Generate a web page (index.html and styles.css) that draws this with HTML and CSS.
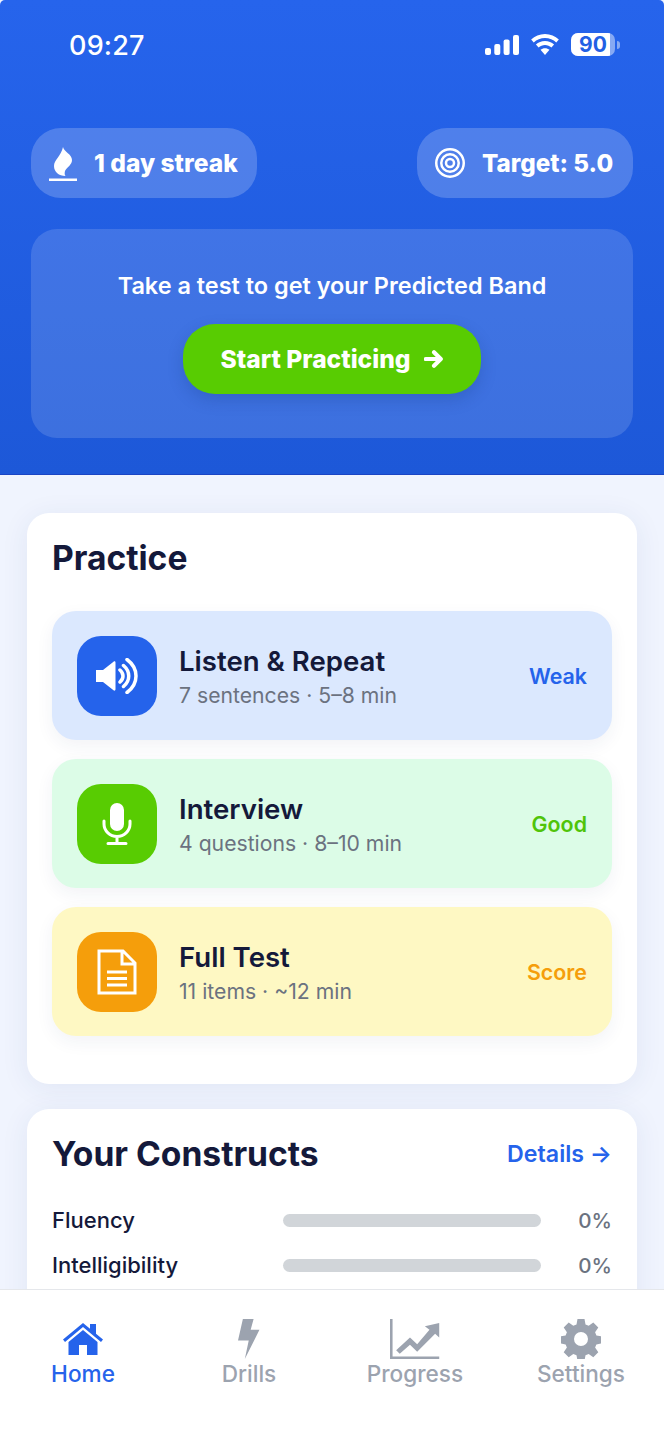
FILE: index.html
```html
<!DOCTYPE html>
<html lang="en">
<head>
<meta charset="utf-8">
<title>Home</title>
<link rel="stylesheet" href="styles.css">
</head>
<body>
<div class="app">
  <div class="scroll">
    <header class="hero">
      <div class="status">
        <span class="time">09:27</span>
        <div class="status-icons">
          <svg class="signal" viewBox="0 0 34 20"><rect x="0" y="13" width="6" height="7" rx="2"/><rect x="9.3" y="9" width="6" height="11" rx="2"/><rect x="18.6" y="4.5" width="6" height="15.5" rx="2"/><rect x="28" y="0" width="6" height="20" rx="2"/></svg>
          <svg class="wifi" viewBox="0 0 30 22"><path d="M15 0C9.3 0 4.3 2.2 0.5 5.8L3.2 8.8C6.3 5.9 10.4 4.1 15 4.1s8.7 1.8 11.8 4.7l2.7-3C25.7 2.2 20.7 0 15 0z"/><path d="M15 7.4c-3.7 0-7 1.4-9.5 3.7l2.8 3c1.8-1.6 4.1-2.6 6.7-2.6s4.9 1 6.7 2.6l2.8-3C22 8.8 18.7 7.4 15 7.4z"/><path d="M15 14.8c-1.8 0-3.4 0.7-4.7 1.8L15 22l4.7-5.4c-1.3-1.1-2.9-1.8-4.7-1.8z"/></svg>
          <div class="battery">
            <div class="battery-body"><div class="battery-fill"></div><span class="battery-num">90</span></div>
            <div class="battery-nub"></div>
          </div>
        </div>
      </div>
      <div class="pills">
        <div class="pill pill-streak">
          <svg class="pill-icon flame" viewBox="0 0 28 34"><path d="M14 0C15 5 23 7 23 13C23 18 18 20 16 24C15.5 26 15.5 28 16.5 29C10 29 5 25 5 19C5 13 12 9 14 0z"/><rect x="0" y="31.5" width="28" height="2.5"/></svg>
          <span>1 day streak</span>
        </div>
        <div class="pill pill-target">
          <svg class="pill-icon rings" viewBox="0 0 30 30"><circle cx="15" cy="15" r="13.75"/><circle cx="15" cy="15" r="8.75"/><circle cx="15" cy="15" r="4"/></svg>
          <span>Target: 5.0</span>
        </div>
      </div>
      <section class="predict">
        <p class="predict-text">Take a test to get your Predicted Band</p>
        <button class="start">Start Practicing
          <svg class="start-arrow" viewBox="0 0 22 22"><path d="M2 11h16M11 3.5l7.5 7.5-7.5 7.5"/></svg>
        </button>
      </section>
    </header>

    <main class="content">
      <section class="card card-practice">
        <h2 class="card-title">Practice</h2>
        <div class="rows">
          <div class="row row-blue">
            <div class="tile tile-blue">
              <svg class="tile-icon" viewBox="0 0 42 36"><path class="solid" d="M0 12h7L17.5 3.7c1-.8 2-.3 2 1v26.6c0 1.3-1 1.800-2 1L7 24H0z"/><path class="line" d="M24 12c4 3.500 4 8.500 0 12M27.500 7.500c7 6 7 15 0 21M31 1.500c12 9 12 24 0 33"/></svg>
            </div>
            <div class="row-text">
              <div class="row-title">Listen &amp; Repeat</div>
              <div class="row-sub">7 sentences · 5–8 min</div>
            </div>
            <span class="badge badge-blue">Weak</span>
          </div>
          <div class="row row-green">
            <div class="tile tile-green">
              <svg class="tile-icon mic" viewBox="0 0 30 42"><rect class="solid" x="8" y="0" width="14" height="28" rx="7"/><path class="line" d="M2 18v3c0 7 6 12.5 13 12.5S28 28 28 21v-3M15 33.5v7M6 40.5h18"/></svg>
            </div>
            <div class="row-text">
              <div class="row-title">Interview</div>
              <div class="row-sub">4 questions · 8–10 min</div>
            </div>
            <span class="badge badge-green">Good</span>
          </div>
          <div class="row row-yellow">
            <div class="tile tile-orange">
              <svg class="tile-icon doc" viewBox="0 0 40 46"><path class="line" d="M2 2h24l12 12v30H2zM25 2v13h13M10 23h20M10 29.5h20M10 36h20"/></svg>
            </div>
            <div class="row-text">
              <div class="row-title">Full Test</div>
              <div class="row-sub">11 items · ~12 min</div>
            </div>
            <span class="badge badge-orange">Score</span>
          </div>
        </div>
      </section>

      <section class="card card-constructs">
        <div class="card-head">
          <h2 class="card-title">Your Constructs</h2>
          <a class="details">Details →</a>
        </div>
        <div class="meter"><span class="meter-name">Fluency</span><div class="meter-bar"></div><span class="meter-val">0%</span></div>
        <div class="meter"><span class="meter-name">Intelligibility</span><div class="meter-bar"></div><span class="meter-val">0%</span></div>
      </section>
    </main>
  </div>

  <nav class="tabs">
    <a class="tab tab-active">
      <svg class="tab-icon icon-home" viewBox="0 0 40 32"><path d="M20 0L0 16.5l2 2.4L20 4l18 14.9 2-2.4-7-5.8V1h-6v4.7z"/><path d="M20 7L5.5 19v13h10.5V22h8v10h10.5V19z"/></svg>
      <span>Home</span>
    </a>
    <a class="tab">
      <svg class="tab-icon" viewBox="0 0 22 41"><path d="M5 0h11l-3 11h9L7 41l4-19H0z"/></svg>
      <span>Drills</span>
    </a>
    <a class="tab">
      <svg class="tab-icon" viewBox="0 0 48 39"><path d="M0 0h2.5v36.5H48V39H0z"/><path d="M6 30.5l13.5-12.5 7 6.5L38.5 10.5 34 7l14-3v14l-4-3.5L26.5 32 19.5 25 9.5 34z"/></svg>
      <span>Progress</span>
    </a>
    <a class="tab">
      <svg class="tab-icon" viewBox="0 0 40 40"><path fill-rule="evenodd" d="M16.5 0h7l1 5.5 3.2 1.3 4.6-3.2 5 5-3.2 4.6 1.3 3.2 5.5 1v7l-5.5 1-1.3 3.2 3.2 4.6-5 5-4.6-3.2-3.2 1.3-1 5.5h-7l-1-5.5-3.2-1.3-4.6 3.2-5-5 3.2-4.6-1.3-3.2-5.5-1v-7l5.5-1 1.3-3.2-3.2-4.6 5-5 4.6 3.2 3.2-1.3zM20 13a7 7 0 1 0 0 14 7 7 0 0 0 0-14z"/></svg>
      <span>Settings</span>
    </a>
  </nav>
</div>
</body>
</html>
```
FILE: styles.css
```css
* { box-sizing: border-box; margin: 0; padding: 0; }

html, body { height: 100%; background: #fff; }

body {
  font-family: Inter, "Liberation Sans", sans-serif;
  overflow: hidden;
}

.app {
  width: 664px;
  height: 1440px;
  display: flex;
  flex-direction: column;
  overflow: hidden;
}

.scroll {
  flex: 1;
  min-height: 0;
  overflow: hidden;
  background: #f0f4fe;
}

/* Blue header */
.hero {
  height: 475px;
  padding: 0 31px;
  background: linear-gradient(180deg, #2664ec 0%, #1d58d8 100%);
  border-bottom: 1px solid #1a45c4;
  border-radius: 5px 5px 0 0;
  color: #fff;
}

.status {
  height: 128px;
  padding: 34px 13px 0 38px;
  display: flex;
  justify-content: space-between;
  align-items: flex-start;
}

.time {
  font-size: 27px;
  line-height: 24px;
  font-weight: 500;
  letter-spacing: 0.2px;
}

.status-icons {
  display: flex;
  align-items: center;
  gap: 11px;
  margin-top: -1px;
}

.signal { width: 34px; height: 20px; fill: #fff; }
.wifi { width: 30px; height: 21px; fill: #fff; }

.battery { display: flex; align-items: center; gap: 2px; }

.battery-body {
  position: relative;
  width: 44px;
  height: 23px;
  border-radius: 7px;
  background: rgba(255, 255, 255, 0.45);
  overflow: hidden;
  display: flex;
  align-items: center;
  justify-content: center;
}

.battery-fill {
  position: absolute;
  inset: 0 5px 0 0;
  background: #fff;
}

.battery-num {
  position: relative;
  font-size: 21px;
  line-height: 23px;
  font-weight: 700;
  color: #2260e4;
}

.battery-nub {
  width: 3px;
  height: 8px;
  border-radius: 0 3px 3px 0;
  background: rgba(255, 255, 255, 0.45);
}

.pills { display: flex; justify-content: space-between; }

.pill {
  height: 70px;
  border-radius: 30px;
  background: rgba(255, 255, 255, 0.2);
  display: flex;
  align-items: center;
  font-size: 24.6px;
  font-weight: 800;
}

.pill-streak { width: 226px; padding-left: 18px; gap: 17px; }
.pill-target { width: 216px; padding-left: 18px; gap: 17px; font-size: 24.2px; }

.flame { width: 28px; height: 34px; fill: #fff; margin-top: 2px; }
.rings { width: 30px; height: 30px; fill: none; stroke: #fff; stroke-width: 2.5; }

.predict {
  margin-top: 31px;
  height: 209px;
  border-radius: 26px;
  background: rgba(255, 255, 255, 0.14);
  display: flex;
  flex-direction: column;
  align-items: center;
  padding-top: 42px;
}

.predict-text {
  font-size: 23.45px;
  line-height: 29px;
  font-weight: 600;
}

.start {
  margin-top: 24px;
  width: 298px;
  height: 70px;
  border: none;
  border-radius: 32px;
  background: #58cc02;
  color: #fff;
  font-family: inherit;
  font-size: 24.6px;
  font-weight: 800;
  display: flex;
  align-items: center;
  justify-content: center;
  gap: 13px;
  box-shadow: 0 6px 16px rgba(20, 50, 120, 0.22);
}

.start-arrow {
  width: 20px;
  height: 22px;
  fill: none;
  stroke: #fff;
  stroke-width: 4.5;
  stroke-linecap: round;
  stroke-linejoin: round;
}

/* Cards */
.content {
  padding: 38px 27px 0;
  display: flex;
  flex-direction: column;
  gap: 25px;
}

.card {
  background: #fff;
  border-radius: 22px;
  padding: 0 25px;
  box-shadow: 0 4px 28px rgba(40, 60, 130, 0.08);
}

.card-practice { height: 571px; padding-top: 25px; }
.card-constructs { height: 300px; padding-top: 25px; }

.card-title {
  font-size: 33.6px;
  line-height: 40px;
  font-weight: 700;
  color: #14193a;
}

.rows {
  margin-top: 33px;
  display: flex;
  flex-direction: column;
  gap: 19px;
}

.row {
  height: 129px;
  border-radius: 24px;
  padding: 0 25px;
  display: flex;
  align-items: center;
  gap: 22px;
  box-shadow: 0 6px 18px rgba(30, 50, 110, 0.06);
}

.row-blue { background: #dbe8fe; }
.row-green { background: #dcfce7; }
.row-yellow { background: #fef8c3; }

.tile {
  width: 80px;
  height: 80px;
  flex: none;
  border-radius: 24px;
  display: flex;
  align-items: center;
  justify-content: center;
}

.tile-blue { background: #2563eb; }
.tile-green { background: #58cc02; }
.tile-orange { background: #f59e0b; }

.tile-icon { width: 42px; height: 36px; }
.tile-icon.mic { width: 30px; height: 42px; }
.tile-icon.doc { width: 40px; height: 46px; }

.solid { fill: #fff; }
.line {
  fill: none;
  stroke: #fff;
  stroke-width: 3.5;
  stroke-linecap: round;
}

.mic .line { stroke-width: 3; }
.doc .line { stroke-width: 3; stroke-linecap: butt; }

.row-text { flex: 1; min-width: 0; padding-top: 1px; }

.row-title {
  font-size: 27.6px;
  line-height: 33px;
  font-weight: 600;
  color: #14193a;
}

.row-sub {
  margin-top: 4px;
  font-size: 21.2px;
  line-height: 26px;
  color: #6b7280;
}

.badge { font-size: 21.4px; font-weight: 600; }
.badge-blue { color: #2563eb; }
.badge-green { color: #50c40a; }
.badge-orange { color: #f59e0b; }

.card-head {
  display: flex;
  justify-content: space-between;
  align-items: center;
}

.details { font-size: 23.2px; font-weight: 600; color: #2563eb; }

.meter {
  height: 45px;
  display: flex;
  align-items: center;
  font-size: 22px;
  color: #14193a;
}

.card-head + .meter { margin-top: 23px; }

.meter-name { width: 231px; font-weight: 500; }

.meter-bar {
  width: 258px;
  height: 13px;
  margin-top: 2px;
  border-radius: 7px;
  background: #d1d5d9;
}

.meter-val {
  flex: 1;
  text-align: right;
  font-size: 20.6px;
  font-weight: 500;
  margin-top: 2px;
  color: #6b7280;
}

/* Bottom navigation */
.tabs {
  height: 151px;
  flex: none;
  background: #fff;
  border-top: 1px solid #e5e7eb;
  display: grid;
  grid-template-columns: repeat(4, 1fr);
}

.tab {
  padding-top: 29px;
  display: flex;
  flex-direction: column;
  align-items: center;
  font-size: 22.6px;
  line-height: 28px;
  font-weight: 500;
  color: #9ca3af;
}

.tab-active { color: #2563eb; }

.tab-icon { height: 40px; fill: currentColor; margin-bottom: 1px; }

.icon-home { height: 32px; margin-top: 4px; margin-bottom: 5px; }
```
